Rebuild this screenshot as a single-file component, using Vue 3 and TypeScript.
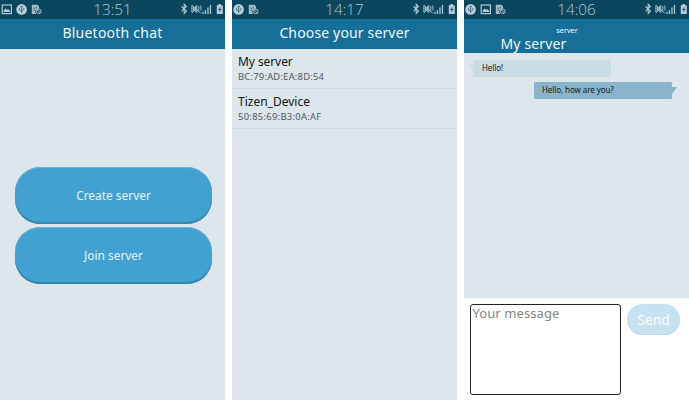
<script setup lang="ts">
type IconName = 'picture' | 'usb' | 'file'

interface Server {
  name: string
  address: string
}

interface Screen {
  id: 'home' | 'servers' | 'chat'
  time: string
  icons: IconName[]
}

const screens: Screen[] = [
  { id: 'home', time: '13:51', icons: ['picture', 'usb', 'file'] },
  { id: 'servers', time: '14:17', icons: ['usb', 'file'] },
  { id: 'chat', time: '14:06', icons: ['usb', 'picture', 'file'] },
]

const servers: Server[] = [
  { name: 'My server', address: 'BC:79:AD:EA:8D:54' },
  { name: 'Tizen_Device', address: '50:85:69:B3:0A:AF' },
]
</script>

<template>
  <main class="gallery">
    <section v-for="screen in screens" :key="screen.id" class="phone" :class="screen.id">
      <div class="status">
        <div class="notices">
          <template v-for="icon in screen.icons" :key="icon">
            <svg v-if="icon === 'picture'" class="notice" viewBox="0 0 11 11">
              <rect x="1.2" y="1" width="9.2" height="8.6" fill="none" stroke="#b4cad3" stroke-width="1.2" />
              <path d="M2.6 8V6.6l2-2.2 1.5 1.4 1-.8 2 2v1z" fill="#b4cad3" />
            </svg>
            <svg v-else-if="icon === 'usb'" class="notice" viewBox="0 0 11 11">
              <circle cx="5.6" cy="5.4" r="5.3" fill="#b9ced7" />
              <path d="M5.6 9V2.2M4.5 3.2l1.1-1.4 1.1 1.4M3.4 4v1.9l2.2 1.4 2.2-1.6V4" fill="none" stroke="#3b6b7f" stroke-width="0.9" />
            </svg>
            <svg v-else class="notice" viewBox="0 0 11 11">
              <path d="M.8.8h5.5l1.8 1.7v2.3a3.2 3.2 0 0 0-3 5.2H.8z" fill="#a3bcc7" />
              <path d="M2.2 4.2h2M2.2 6.3h2M5.2 2.5v2" stroke="#275c72" stroke-width="0.8" />
              <circle cx="7.8" cy="7.4" r="2.3" fill="#174e64" stroke="#a9c1cb" stroke-width="1" />
              <path d="M6.2 5.8l3.2 3.2" stroke="#a9c1cb" stroke-width="0.9" />
            </svg>
          </template>
        </div>
        <time class="clock">{{ screen.time }}</time>
        <svg class="radios" viewBox="0 0 44 12">
          <path d="M1.5 3.5l5 4.8-2.3 2.2V1.3l2.3 2.2-5 4.8" fill="none" stroke="#b3cad3" stroke-width="1.1" />
          <path d="M12.5 4h2l2.8-2.4v8.8L14.5 8h-2z" fill="#8facb9" />
          <path d="M11.6 1.8l9.2 8.4M18.8 3v5.5M20.9 2.4v5.2M11.8 10l3-2.7M11.8 2.6v6.6" fill="none" stroke="#9cb8c4" stroke-width="1" />
          <path d="M23 8.5V11M25.5 7v4M28 4.5V11M30.5 2v9" stroke="#a9c2cc" stroke-width="1.3" />
          <path d="M36.8 2.2h1.7V1H41v1.2h1.8V11h-6z" fill="#b8ccd5" />
          <path d="M40.5 3.5L38.2 7h1.5l-.5 2.7L41.5 6h-1.4z" fill="#174e64" />
        </svg>
      </div>

      <template v-if="screen.id === 'home'">
        <header class="bar"><h1 class="title home-title">Bluetooth chat</h1></header>
        <div class="actions">
          <button class="action create">Create server</button>
          <button class="action join">Join server</button>
        </div>
      </template>

      <template v-else-if="screen.id === 'servers'">
        <header class="bar"><h1 class="title servers-title">Choose your server</h1></header>
        <ul class="list">
          <li v-for="server in servers" :key="server.address" class="row">
            <span class="name">{{ server.name }}</span>
            <span class="address">{{ server.address }}</span>
          </li>
        </ul>
      </template>

      <template v-else>
        <header class="bar tall">
          <span class="role">server</span>
          <h1 class="title chat-title">My server</h1>
        </header>
        <div class="messages">
          <p class="bubble received">Hello!</p>
          <p class="bubble sent">Hello, how are you?</p>
        </div>
        <form class="composer" @submit.prevent>
          <textarea class="field" placeholder="Your message"></textarea>
          <button class="send">Send</button>
        </form>
      </template>
    </section>
  </main>
</template>

<style>
body {
  background: #fff;
}
</style>

<style scoped>
.gallery {
  display: flex;
  gap: 7px;
  width: 689px;
  height: 400px;
  overflow: hidden;
  font-family: "Noto Sans", "Open Sans", sans-serif;
}
.phone {
  display: flex;
  flex-direction: column;
  width: 225px;
  height: 400px;
  background: #dde6eb;
}
.status {
  display: grid;
  grid-template-columns: 1fr 50px 1fr;
  align-items: start;
  flex: none;
  height: 19px;
  background: #0a475f;
}
.notices {
  display: flex;
  gap: 4px;
  padding: 4px 0 0 1px;
}
.notice {
  width: 11px;
  height: 11px;
}
.clock {
  color: #b0c9d3;
  font-family: "Open Sans", "Noto Sans", sans-serif;
  font-weight: 300;
  font-size: 15.2px;
  line-height: 19px;
  text-align: center;
  white-space: nowrap;
}
.radios {
  width: 44px;
  height: 12px;
  justify-self: end;
  margin: 3px 1px 0 0;
}
.bar {
  display: flex;
  flex-direction: column;
  align-items: center;
  flex: none;
  height: 30px;
  background: #166f98;
  color: #f2f8fa;
}
.title {
  margin: 0;
  font-weight: 400;
  font-size: 14px;
  line-height: 28px;
  letter-spacing: 0.15px;
  white-space: nowrap;
}
.home-title {
  letter-spacing: 0.24px;
}
.tall {
  height: 34px;
}
.role {
  margin: 6px 0 0 -19px;
  font-size: 7.3px;
  line-height: 10px;
}
.chat-title {
  align-self: flex-start;
  margin-left: 36.5px;
  line-height: 18px;
}
.actions {
  display: flex;
  flex-direction: column;
  gap: 3px;
  padding: 118px 13px 0 15px;
}
.action {
  height: 57px;
  padding: 0 0 1px;
  border: 0;
  border-radius: 25px;
  background: #41a1d0;
  box-shadow: inset 0 -2px 1px #3386b0, inset 0 1px 1px #70b4d5;
  color: #e9f3f8;
  font: 400 11.9px "Noto Sans", sans-serif;
}
.list {
  margin: 0;
  padding: 0;
  list-style: none;
}
.row {
  display: flex;
  flex-direction: column;
  box-sizing: border-box;
  height: 40px;
  padding: 4px 6px 0;
  border-bottom: 1px solid #c9dae2;
}
.name {
  color: #111719;
  font-size: 12px;
  line-height: 17px;
}
.row:first-child .name {
  letter-spacing: -0.08px;
}
.address {
  color: #50585c;
  font-size: 9.4px;
  line-height: 13px;
  letter-spacing: 0.23px;
}
.row:last-child .address {
  letter-spacing: 0.3px;
}
.messages {
  display: flex;
  flex-direction: column;
  gap: 5px;
  flex: none;
  box-sizing: border-box;
  height: 245px;
  padding: 7px 17px 0 9px;
}
.bubble {
  position: relative;
  box-sizing: border-box;
  width: 138px;
  height: 17px;
  margin: 0;
  padding-left: 9px;
  border-radius: 1.5px;
  background: #c9dce3;
  color: #101b20;
  font-size: 8px;
  line-height: 16px;
  letter-spacing: -0.08px;
}
.sent {
  align-self: flex-end;
  padding-left: 8px;
  background: #89b4c9;
}
.bubble::after {
  position: absolute;
  top: 5px;
  left: -4px;
  width: 5px;
  height: 7px;
  background: inherit;
  clip-path: polygon(0 0, 100% 0, 100% 100%);
  content: "";
}
.sent::after {
  right: -5px;
  left: auto;
  clip-path: polygon(0 0, 100% 0, 0 100%);
}
.composer {
  display: flex;
  align-items: flex-start;
  gap: 6.5px;
  flex: 1;
  padding: 6px 9px 0 6px;
  background: #fff;
}
.field {
  box-sizing: border-box;
  width: 150.5px;
  height: 91px;
  margin: 0;
  padding: 0 1.5px;
  border: 1px solid #222;
  border-radius: 3px;
  background: #fff;
  font: 400 13px/17px "Noto Sans", sans-serif;
  letter-spacing: 0.08px;
  resize: none;
}
.field::placeholder {
  color: #858585;
}
.send {
  width: 53px;
  height: 31px;
  padding: 0;
  border: 0;
  border-radius: 15.5px;
  background: #c6e1f0;
  box-shadow: inset 0 -1px 1px #b9d9e8;
  color: #f9fdff;
  font: 400 13.7px "Noto Sans", sans-serif;
}
</style>
